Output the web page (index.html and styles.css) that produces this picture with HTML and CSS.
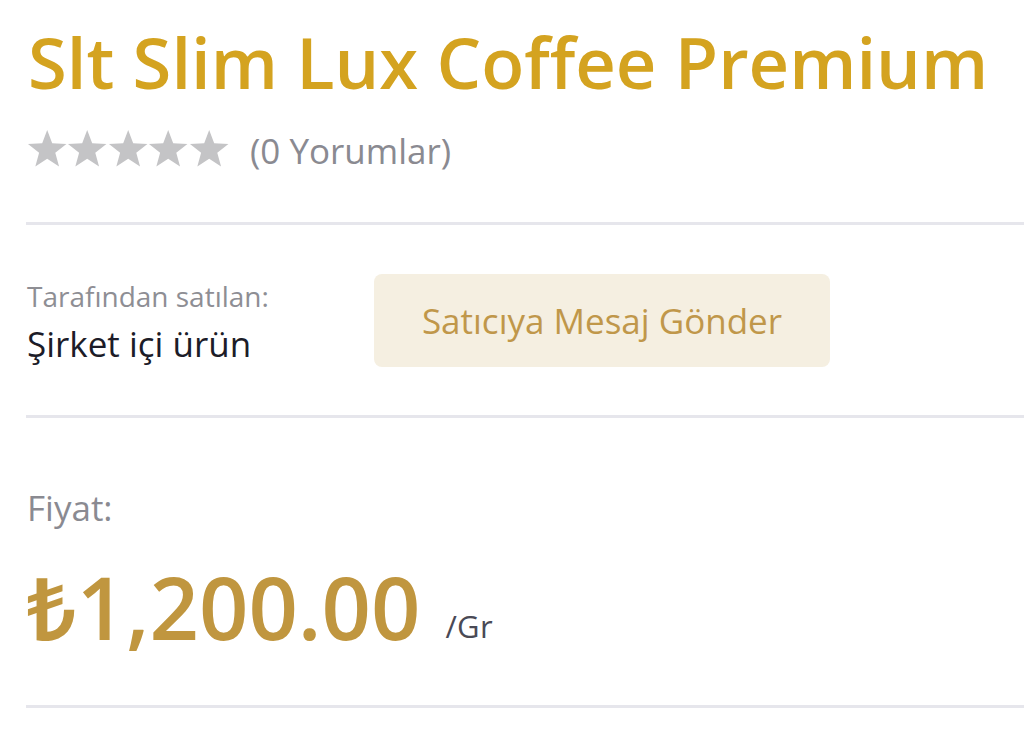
FILE: index.html
```html
<!DOCTYPE html>
<html lang="tr">
<head>
<meta charset="utf-8">
<title>Slt Slim Lux Coffee Premium</title>
<link rel="stylesheet" href="styles.css">
</head>
<body>
<main class="product">
  <section class="head">
    <h1 class="title">Slt Slim Lux Coffee Premium</h1>
    <div class="rating">
      <span class="stars">
        <svg viewBox="0 0 40.4 37"><path d="M20.2 0L25.2 13.32 39.41 13.96 28.28 22.83 32.07 36.54 20.2 28.7 8.33 36.54 12.12 22.83 0.99 13.96 15.2 13.32Z"/></svg>
        <svg viewBox="0 0 40.4 37"><path d="M20.2 0L25.2 13.32 39.41 13.96 28.28 22.83 32.07 36.54 20.2 28.7 8.33 36.54 12.12 22.83 0.99 13.96 15.2 13.32Z"/></svg>
        <svg viewBox="0 0 40.4 37"><path d="M20.2 0L25.2 13.32 39.41 13.96 28.28 22.83 32.07 36.54 20.2 28.7 8.33 36.54 12.12 22.83 0.99 13.96 15.2 13.32Z"/></svg>
        <svg viewBox="0 0 40.4 37"><path d="M20.2 0L25.2 13.32 39.41 13.96 28.28 22.83 32.07 36.54 20.2 28.7 8.33 36.54 12.12 22.83 0.99 13.96 15.2 13.32Z"/></svg>
        <svg viewBox="0 0 40.4 37"><path d="M20.2 0L25.2 13.32 39.41 13.96 28.28 22.83 32.07 36.54 20.2 28.7 8.33 36.54 12.12 22.83 0.99 13.96 15.2 13.32Z"/></svg>
      </span>
      <span class="reviews">(0 Yorumlar)</span>
    </div>
  </section>
  <section class="seller">
    <div class="seller-info">
      <div class="seller-label">Tarafından satılan:</div>
      <div class="seller-name">Şirket içi ürün</div>
    </div>
    <button class="msg-btn" type="button">Satıcıya Mesaj Gönder</button>
  </section>
  <section class="pricing">
    <div class="price-label">Fiyat:</div>
    <div class="price-row">
      <span class="price">₺1,200.00</span>
      <span class="unit">/Gr</span>
    </div>
  </section>
</main>
</body>
</html>
```

FILE: styles.css
```css
* { box-sizing: border-box; }
html, body { margin: 0; padding: 0; background: #fff; }
body { font-family: "Open Sans", "Noto Sans", sans-serif; }

.product { padding-left: 26px; }

/* title + rating */
.head {
  padding: 19px 0 0 2px;
  height: 225px;
  border-bottom: 3px solid #e6e6ec;
}
.title {
  margin: 0;
  font-size: 70.5px;
  font-weight: 600;
  line-height: 86px;
  color: #d4a320;
  white-space: nowrap;
}
.rating {
  display: flex;
  align-items: flex-start;
  margin-top: 25px;
}
.stars { display: flex; margin-left: -1px; }
.stars svg { width: 40.4px; height: 37px; fill: #c4c4c6; display: block; }
.reviews {
  margin-left: 21px;
  margin-top: 1px;
  font-size: 35px;
  line-height: 40px;
  color: #8a8a91;
}

/* seller */
.seller {
  height: 193px;
  border-bottom: 3px solid #e6e6ec;
  display: flex;
  align-items: flex-start;
  padding: 49px 0 0 1px;
}
.seller-info { width: 347px; margin-top: 3px; }
.seller-label { font-size: 28px; color: #8e8e94; line-height: 38px; }
.seller-name { font-size: 35px; color: #1c1c28; line-height: 48px; margin-top: 5px; }
.msg-btn {
  width: 456px;
  height: 93px;
  border: none;
  border-radius: 8px;
  background: #f5efe1;
  color: #c0974a;
  font-family: inherit;
  font-size: 35px;
  padding: 0;
}

/* price */
.pricing {
  height: 290px;
  border-bottom: 3px solid #e6e6ec;
  padding: 68px 0 0 1px;
}
.price-label { font-size: 35px; color: #8a8a91; line-height: 44px; }
.price-row {
  display: flex;
  align-items: baseline;
  gap: 25px;
  margin-top: 27px;
}
.price { font-size: 86.5px; font-weight: 600; color: #c0963f; line-height: 100px; }
.unit { font-size: 31px; letter-spacing: 0.3px; color: #4a4a55; position: relative; top: -2px; }
```
